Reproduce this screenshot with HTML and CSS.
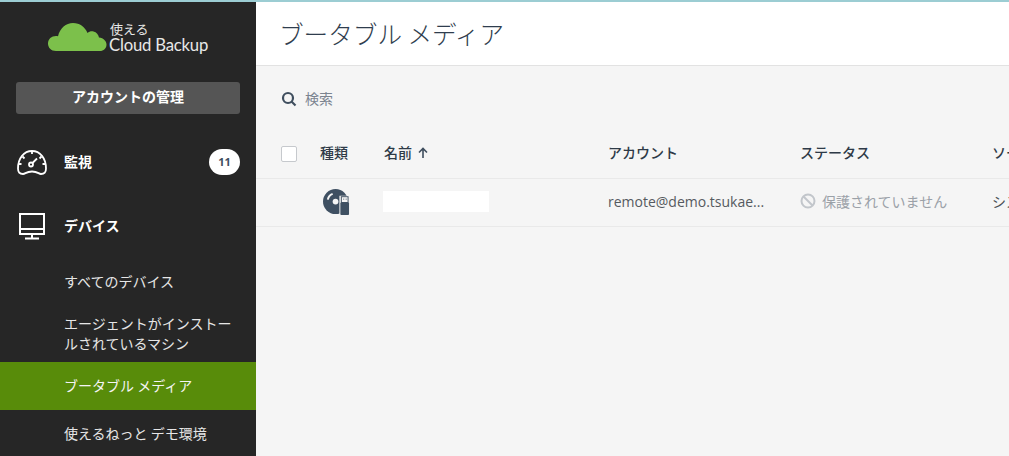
FILE: index.html
```html
<!DOCTYPE html>
<html lang="ja">
<head>
<meta charset="utf-8">
<title>ブータブル メディア</title>
<link rel="stylesheet" href="styles.css">
</head>
<body>
<div class="app">
  <aside class="sidebar">
    <div class="logo">
      <svg class="logo-cloud" width="60" height="30" viewBox="0 0 60 30"><path fill="#7cc04b" d="M8 29C3 29 0 25.500 0 21.500C0 17 3.500 14 8 14C8.500 14 9.500 14 10 14.200C12 6 18 1 25 1C32 1 37 5 39.500 11C41 9.500 43.500 9 45.500 9.500C48.500 10.200 50.500 12.500 51 15.500C55.500 16 58.500 19 58.500 22.500C58.500 26.500 55.500 29 52 29Z"/></svg>
      <div class="logo-text">
        <span class="logo-ja">使える</span>
        <span class="logo-en">Cloud Backup</span>
      </div>
    </div>
    <button class="manage">アカウントの管理</button>
    <nav class="nav">
      <a class="nav-main">
        <svg class="nav-icon" width="32" height="28" viewBox="0 0 32 28" fill="none" stroke="#fff" stroke-width="1.800"><path d="M7 26C3.500 26 2 24 2 20.500C2 10 8 3 16 3C24 3 30 10 30 20.500C30 24 28.500 26 25 26C22.500 26 22 23.500 16 23.500C10 23.500 9.500 26 7 26Z"/><path d="M16 3V6M2.500 16H5.500M26.500 16H29.500M6.500 8.500L8.500 10.500M25.500 8.500L23.500 10.500"/><circle cx="15" cy="16.500" r="2"/><path d="M16.500 15L21 10.500"/></svg>
        <span class="nav-label">監視</span>
        <span class="badge">11</span>
      </a>
      <a class="nav-main">
        <svg class="nav-icon" width="32" height="28" viewBox="0 0 32 28" fill="none" stroke="#fff" stroke-width="2"><rect x="4" y="2" width="24" height="20"/><path d="M4 17H28M16 22V26M9 26.500H23"/></svg>
        <span class="nav-label">デバイス</span>
      </a>
      <a class="nav-sub">すべてのデバイス</a>
      <a class="nav-sub nav-sub-tall">エージェントがインストールされているマシン</a>
      <a class="nav-sub is-active">ブータブル メディア</a>
      <a class="nav-sub">使えるねっと デモ環境</a>
    </nav>
  </aside>
  <main class="main">
    <header class="header"><h1 class="title">ブータブル メディア</h1></header>
    <div class="search">
      <svg width="16" height="16" viewBox="0 0 16 16" fill="none" stroke="#3f4e5e" stroke-width="2.200"><circle cx="7" cy="7" r="5"/><path d="M10.500 10.500L14.500 14.500"/></svg>
      <span class="search-text">検索</span>
    </div>
    <div class="table">
      <div class="row row-head">
        <span class="cell"><span class="checkbox"></span></span>
        <span class="cell">種類</span>
        <span class="cell cell-name">名前
          <svg class="sort" width="10" height="11" viewBox="0 0 10 11" fill="none" stroke="#3f4e5e" stroke-width="1.600"><path d="M5 11V1.500M1 5.500L5 1.500L9 5.500"/></svg>
        </span>
        <span class="cell">アカウント</span>
        <span class="cell">ステータス</span>
        <span class="cell">ソース</span>
      </div>
      <div class="row row-body">
        <span class="cell"></span>
        <span class="cell">
          <svg class="media-icon" width="27" height="27" viewBox="0 0 28 28"><circle cx="13" cy="13" r="13" fill="#3f5062"/><circle cx="13" cy="13" r="3" fill="#f5f5f5"/><path d="M5 11C5.500 8 7.500 6 10 5" fill="none" stroke="#f5f5f5" stroke-width="2"/><rect x="17" y="7" width="10" height="21" fill="#f5f5f5"/><rect x="19" y="8" width="7" height="6" fill="#f5f5f5" stroke="#3f5062" stroke-width="1"/><rect x="18" y="14" width="9" height="13" rx="1" fill="#3f5062"/><path d="M21 10.500H22M23.500 10.500H24.500" stroke="#3f5062"/></svg>
        </span>
        <span class="cell"><span class="redacted"></span></span>
        <span class="cell cell-latin">remote@demo.tsukae...</span>
        <span class="cell cell-muted">
          <svg width="16" height="16" viewBox="0 0 16 16" fill="none" stroke="#c2c6cb" stroke-width="2"><circle cx="8" cy="8" r="6.500"/><path d="M3.500 3.500L12.500 12.500"/></svg>
          保護されていません
        </span>
        <span class="cell">システム</span>
      </div>
    </div>
  </main>
</div>
</body>
</html>
```

FILE: styles.css
```css
* { box-sizing: border-box; }
html, body { margin: 0; height: 100%; overflow: hidden; }
body {
  font-family: "Noto Sans CJK JP", "Open Sans", sans-serif;
  background: #f5f5f5;
  border-top: 2px solid #9ccdd3;
}
.app { display: flex; height: 454px; overflow: hidden; }

.sidebar { width: 256px; flex: none; background: #262626; color: #fff; }
.logo { display: flex; height: 80px; padding: 18px 0 0 48px; align-items: flex-start; }
.logo-cloud { flex: none; margin-top: 2px; }
.logo-text { display: flex; flex-direction: column; margin-left: 1px; color: #e8e8e8; }
.logo-ja { font-size: 13px; line-height: 17px; padding-left: 1px; }
.logo-en { font-family: "Lato", sans-serif; font-size: 16.700px; line-height: 16px; white-space: nowrap; letter-spacing: -0.200px; }

.manage {
  display: block; width: 224px; height: 32px; margin: 0 16px; padding: 0 0 3px;
  background: #555; color: #fff; border: 0; border-radius: 3px;
  font: 700 14px/29px "Noto Sans CJK JP", sans-serif;
}
.nav { display: flex; flex-direction: column; margin-top: 16px; }
.nav-main { display: flex; align-items: center; height: 64px; padding: 0 16px; font-size: 14px; font-weight: 700; }
.nav-icon { flex: none; }
.nav-label { margin: 0 0 2px 16px; flex: 1; }
.badge {
  width: 31px; height: 26px; border-radius: 13px; background: #fff; color: #3f4e5e;
  font: 700 11px/26px "Open Sans", sans-serif; text-align: center;
}
.nav-sub {
  display: flex; align-items: center; min-height: 48px; padding: 0 16px 2px 64px;
  font-size: 14px; line-height: 20px; color: #e6e6e6;
}
.nav-sub-tall { min-height: 56px; }
.is-active { background: #588c0a; color: #f4f4f4; }

.main { flex: 1; min-width: 0; overflow: hidden; }
.header { height: 64px; background: #fff; border-bottom: 1px solid #e2e2e2; padding-left: 23px; }
.title { margin: 0; font-size: 24.600px; font-weight: 300; line-height: 62px; color: #2f3d4e; white-space: nowrap; }
.search { display: flex; align-items: center; height: 66px; padding: 0 0 2px 25px; color: #7b8490; font-size: 14px; }
.search svg { margin-top: 2px; }
.search-text { margin-left: 8px; }

.table { width: 900px; }
.row {
  display: grid;
  grid-template-columns: 40px 63px 225px 192px 192px 188px;
  padding-left: 24px;
  border-bottom: 1px solid #e9e9e9;
  align-items: center;
  font-size: 14px;
  white-space: nowrap;
}
.row-head { height: 47px; padding-bottom: 3px; color: #2e3a47; font-weight: 500; }
.row-head .cell { padding-bottom: 3px; }
.row-body { height: 48px; padding-bottom: 3px; color: #4a4f55; }
.cell { display: flex; align-items: center; gap: 6px; }
.cell-name { padding-left: 1px; }
.cell-latin { font-family: "Open Sans", sans-serif; font-size: 14px; color: #555a60; }
.cell-muted { color: #9ba1a8; }
.media-icon { margin: 3px 0 0 3px; }
.checkbox { width: 16px; height: 16px; margin: 3px 0 0 1px; background: #fff; border: 1px solid #c6c9cd; border-radius: 2px; }
.redacted { width: 106px; height: 21px; background: #fff; }
```
